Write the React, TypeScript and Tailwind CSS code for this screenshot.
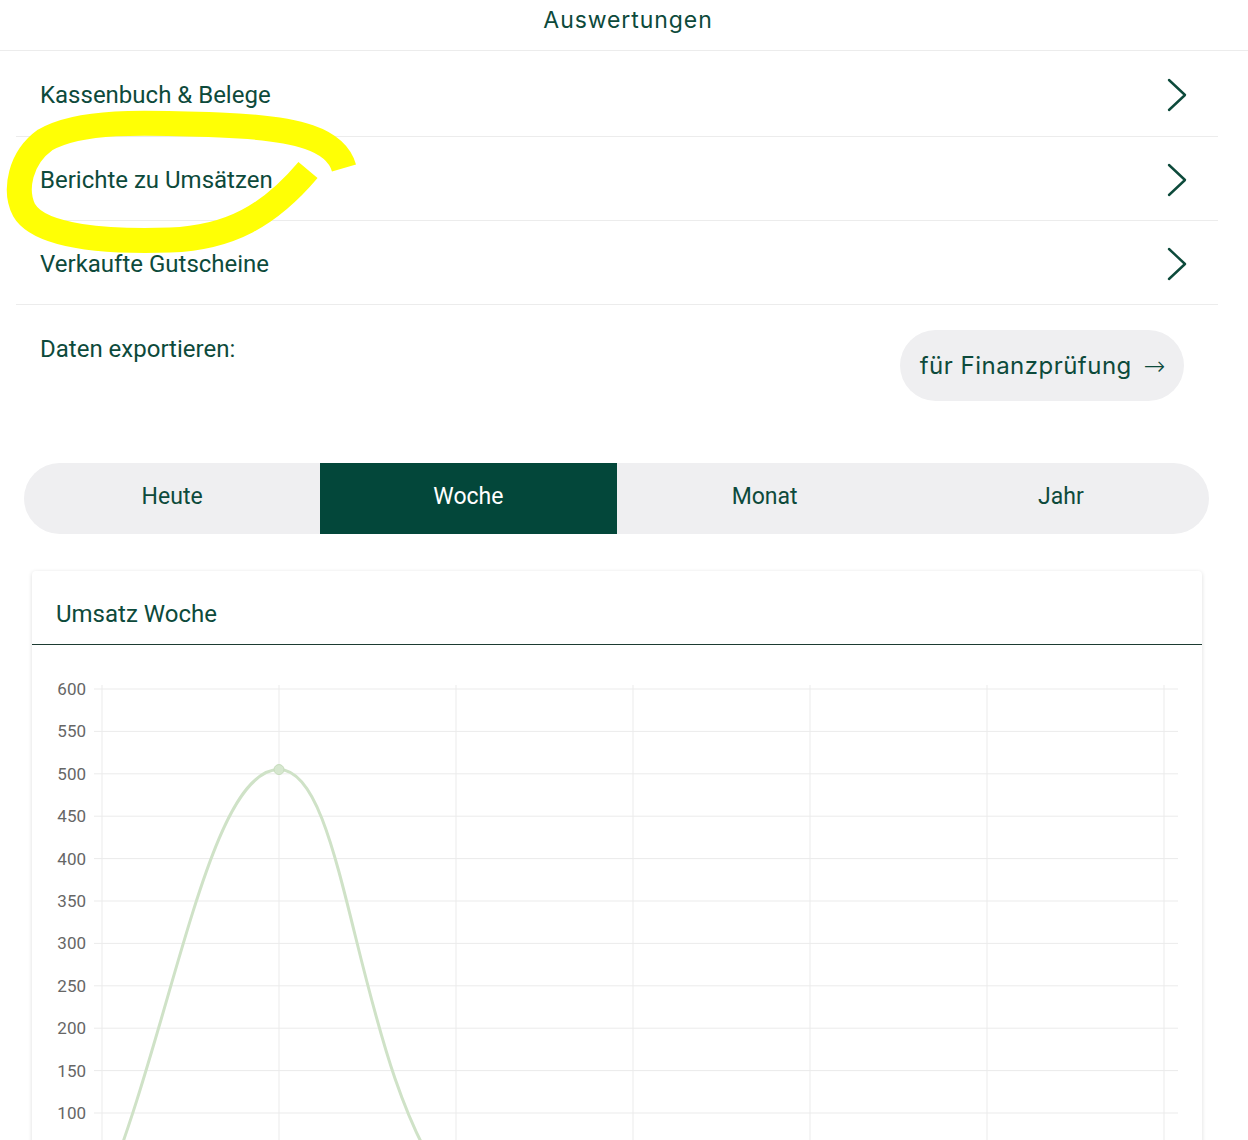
const rows = ['Kassenbuch & Belege', 'Berichte zu Umsätzen', 'Verkaufte Gutscheine'];
const tabs = ['Heute', 'Woche', 'Monat', 'Jahr'];

// chart geometry in page coordinates (svg viewBox is offset to match)
const yTicks = [600, 550, 500, 450, 400, 350, 300, 250, 200, 150, 100, 50, 0];
const yOf = (v: number) => 689 + ((600 - v) / 50) * 42.4;
const xCols = [102, 279, 456, 633, 810, 987, 1164];

function Chevron() {
  return (
    <svg width="22" height="34" viewBox="0 0 22 34" fill="none">
      <polyline points="3,2 19,17 3,32" stroke="currentColor" strokeWidth={2.4} strokeLinecap="round" strokeLinejoin="round" />
    </svg>
  );
}

function Chart() {
  const zero = yOf(0);
  const peak = yOf(505);
  const line =
    `M102,${zero} C172.8,${zero - 171} 208.2,${peak} 279,${peak} ` +
    `C349.8,${peak} 353.6,${zero - 123.6} 456,${zero} L1164,${zero}`;

  return (
    <svg className="block" width="1170" height="620" viewBox="32 645 1170 620">
      {yTicks.map((v) => (
        <g key={v}>
          <line x1={94} x2={1178} y1={yOf(v)} y2={yOf(v)} stroke="#ebebeb" strokeWidth={1} />
          {v >= 100 && (
            <text
              x={86}
              y={yOf(v) + 6}
              textAnchor="end"
              fontSize={17}
              fill="#666666"
              fontFamily="Roboto, 'Liberation Sans', sans-serif"
            >
              {v}
            </text>
          )}
        </g>
      ))}
      {xCols.map((x) => (
        <line key={x} x1={x} x2={x} y1={685} y2={zero + 8} stroke="#ebebeb" strokeWidth={1} />
      ))}
      <path d={line} fill="none" stroke="#cfe2c7" strokeWidth={3} />
      <circle cx={279} cy={peak} r={5} fill="#d6e7cf" stroke="#c6dcbc" strokeWidth={1} />
    </svg>
  );
}

export default function App() {
  return (
    <div className="relative min-h-screen bg-white text-[#0d4a3b] font-['Roboto','Liberation_Sans',sans-serif]">
      <header className="h-[51px] flex items-start justify-center pt-[5px] border-b border-[#ececec]">
        <h1 className="pl-2 text-[23px] leading-[30px] tracking-[0.04em] font-['Inter','Liberation_Sans',sans-serif]">
          Auswertungen
        </h1>
      </header>

      <main className="pl-4 pr-[30px]">
        <ul>
          {rows.map((r, i) => (
            <li
              key={r}
              className={`flex items-center justify-between pl-6 pr-[30px] border-b border-[#ececec] ${i === 0 ? 'h-[86px] pt-[3px]' : 'h-[84px] pt-[2px]'}`}
            >
              <span className="text-[24px]">{r}</span>
              <Chevron />
            </li>
          ))}
        </ul>

        <div className="flex items-start justify-between pl-6 pr-[34px] pt-[25px]">
          <span className="text-[24px] pt-[1px]">Daten exportieren:</span>
          <button className="h-[71px] pl-5 pr-[18px] rounded-full bg-[#efeff1] text-[24px] tracking-[0.02em] font-['Inter','Liberation_Sans',sans-serif] flex items-center gap-[12px]">
            für Finanzprüfung
            <span className="text-[26px] leading-none font-['DejaVu_Sans',sans-serif] font-light">→</span>
          </button>
        </div>

        <div className="mt-[62px] ml-2 mr-[9px] h-[71px] rounded-full overflow-hidden bg-[#efeff1] grid grid-cols-4">
          {tabs.map((t) => (
            <div
              key={t}
              className={`flex items-center justify-center pb-[3px] text-[23px] ${t === 'Woche' ? 'bg-[#03473a] text-white' : ''}`}
            >
              {t}
            </div>
          ))}
        </div>

        <section className="mt-[37px] mx-4 rounded-[4px] bg-white shadow-[0_1px_4px_rgba(0,0,0,0.14)]">
          <div className="h-[74px] flex items-center pl-6 pt-[12px] border-b border-[#1d3b32]">
            <h2 className="text-[24px]">Umsatz Woche</h2>
          </div>
          <Chart />
        </section>
      </main>

      {/* hand-drawn highlight over the second row */}
      <svg
        className="absolute left-0 top-0 pointer-events-none"
        width="400"
        height="280"
        viewBox="0 0 400 280"
      >
        <path
          d="M344,168 C336,140 300,128 220,125 C140,122 80,120 45,140 C20,158 14,190 24,210 C40,238 110,242 170,240 C230,238 270,215 308,170"
          fill="none"
          stroke="#ffff05"
          strokeWidth={25}
          strokeLinecap="butt"
          strokeLinejoin="round"
        />
      </svg>
    </div>
  );
}
